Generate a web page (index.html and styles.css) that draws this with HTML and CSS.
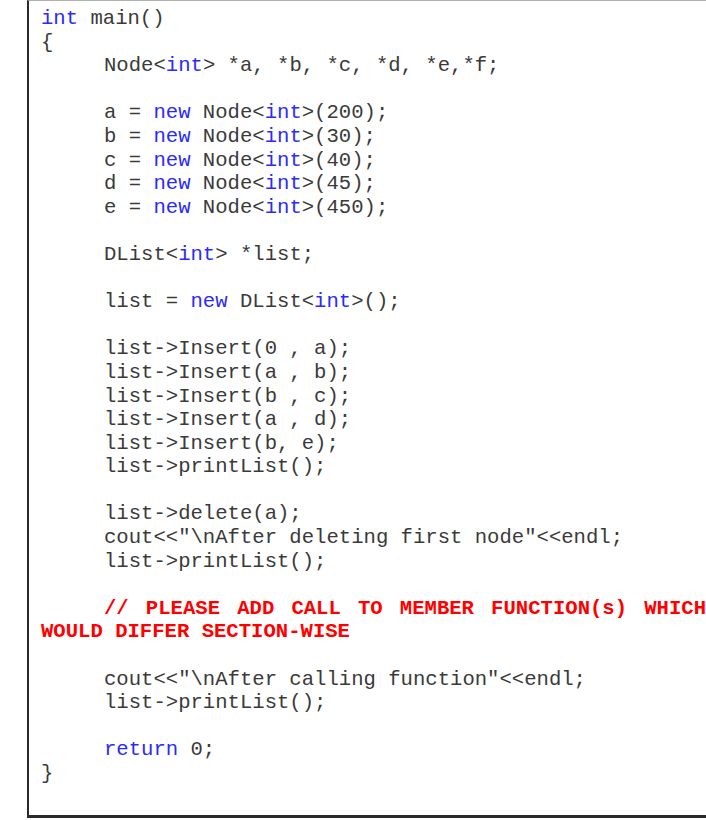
FILE: index.html
```html
<!DOCTYPE html>
<html>
<head>
<meta charset="utf-8">
<link rel="stylesheet" href="styles.css">
</head>
<body>
<div class="page">
  <div class="code">
    <div class="ln"><span class="kw">int</span> main()</div>
    <div class="ln">{</div>
    <div class="ln ind">Node&lt;<span class="kw">int</span>&gt; *a, *b, *c, *d, *e,*f;</div>
    <div class="ln"></div>
    <div class="ln ind">a = <span class="kw">new</span> Node&lt;<span class="kw">int</span>&gt;(200);</div>
    <div class="ln ind">b = <span class="kw">new</span> Node&lt;<span class="kw">int</span>&gt;(30);</div>
    <div class="ln ind">c = <span class="kw">new</span> Node&lt;<span class="kw">int</span>&gt;(40);</div>
    <div class="ln ind">d = <span class="kw">new</span> Node&lt;<span class="kw">int</span>&gt;(45);</div>
    <div class="ln ind">e = <span class="kw">new</span> Node&lt;<span class="kw">int</span>&gt;(450);</div>
    <div class="ln"></div>
    <div class="ln ind">DList&lt;<span class="kw">int</span>&gt; *list;</div>
    <div class="ln"></div>
    <div class="ln ind">list = <span class="kw">new</span> DList&lt;<span class="kw">int</span>&gt;();</div>
    <div class="ln"></div>
    <div class="ln ind">list-&gt;Insert(0 , a);</div>
    <div class="ln ind">list-&gt;Insert(a , b);</div>
    <div class="ln ind">list-&gt;Insert(b , c);</div>
    <div class="ln ind">list-&gt;Insert(a , d);</div>
    <div class="ln ind">list-&gt;Insert(b, e);</div>
    <div class="ln ind">list-&gt;printList();</div>
    <div class="ln"></div>
    <div class="ln ind">list-&gt;delete(a);</div>
    <div class="ln ind">cout&lt;&lt;"\nAfter deleting first node"&lt;&lt;endl;</div>
    <div class="ln ind">list-&gt;printList();</div>
    <div class="ln"></div>
    <div class="note">// PLEASE ADD CALL TO MEMBER FUNCTION(s) WHICH WOULD DIFFER SECTION-WISE</div>
    <div class="ln"></div>
    <div class="ln ind">cout&lt;&lt;"\nAfter calling function"&lt;&lt;endl;</div>
    <div class="ln ind">list-&gt;printList();</div>
    <div class="ln"></div>
    <div class="ln ind"><span class="kw">return</span> 0;</div>
    <div class="ln">}</div>
  </div>
</div>
</body>
</html>
```

FILE: styles.css
```css
html, body {
  margin: 0;
  padding: 0;
  background: #ffffff;
  overflow: hidden;
}

.page {
  margin-left: 27px;
  width: 700px;
  height: 818px;
  border-top: 1px solid #b0b0b0;
  border-left: 2px solid #2a2a2a;
  border-bottom: 3px solid #2a2a2a;
  box-sizing: border-box;
  padding: 6px 0 0 12px;
}

.code {
  width: 665px;
  font-family: "Liberation Mono", "Courier New", monospace;
  font-size: 20.6px;
  line-height: 23.6px;
  color: #3a3a3a;
}

.ln {
  height: 23.6px;
  white-space: pre;
}

.ind {
  padding-left: 63px;
}

.kw {
  color: #2a2aff;
}

.note {
  color: #ff0000;
  font-weight: bold;
  text-indent: 63px;
  text-align: justify;
  text-align-last: left;
}
```
